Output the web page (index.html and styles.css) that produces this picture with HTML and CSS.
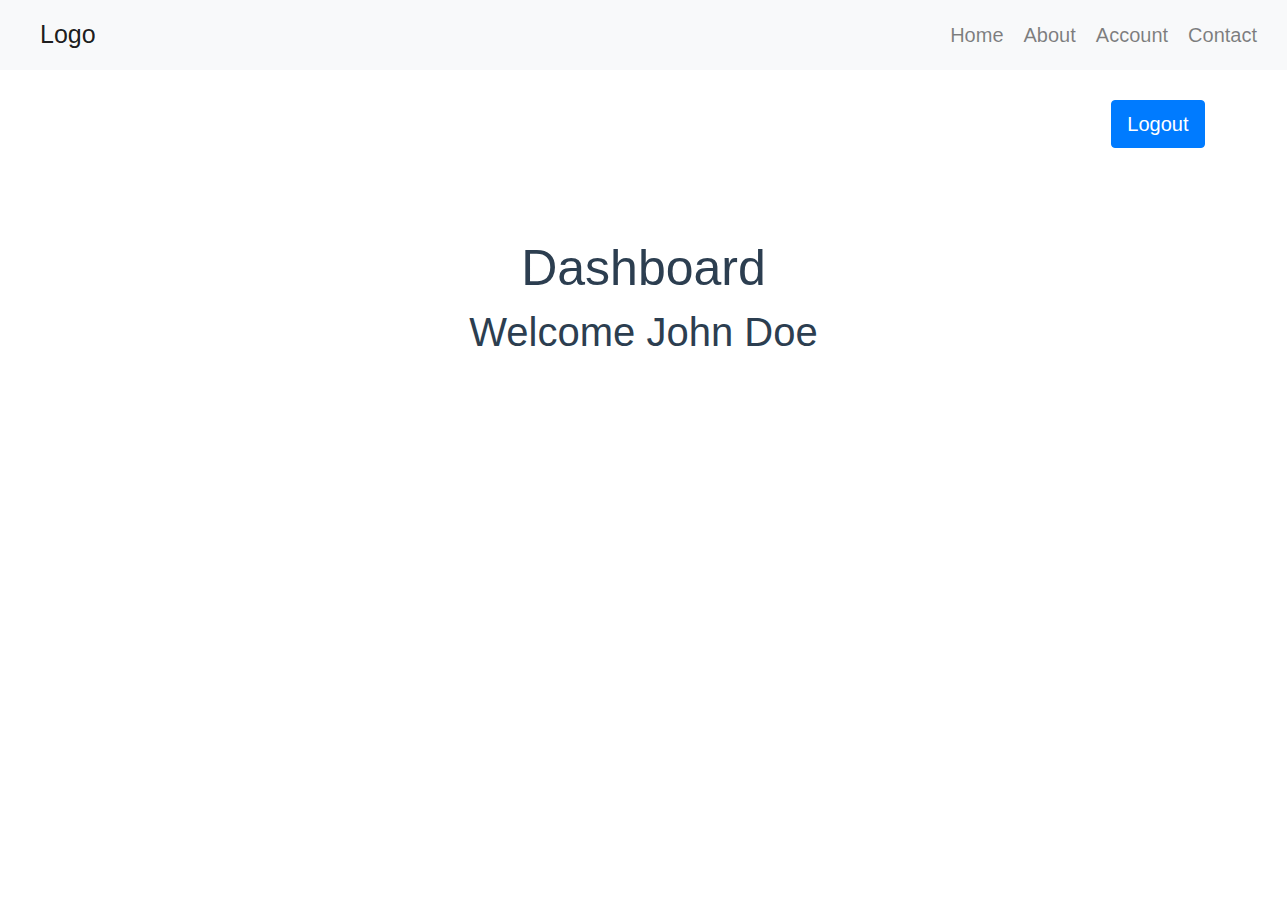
FILE: index.html
```html
<!DOCTYPE html>
<html lang="en">
<head>
<meta charset="utf-8">
<title>Dashboard</title>
<link rel="stylesheet" href="styles.css">
</head>
<body>
<nav class="navbar">
  <a class="brand" href="#">Logo</a>
  <ul class="nav">
    <li><a class="nav-link" href="#">Home</a></li>
    <li><a class="nav-link" href="#">About</a></li>
    <li><a class="nav-link" href="#">Account</a></li>
    <li><a class="nav-link" href="#">Contact</a></li>
  </ul>
</nav>
<main class="main">
  <div class="actions">
    <button class="btn-primary" type="button">Logout</button>
  </div>
  <section class="hero">
    <h1 class="title">Dashboard</h1>
    <h2 class="subtitle">Welcome John Doe</h2>
  </section>
</main>
</body>
</html>
```
FILE: styles.css
```css
html { font-size: 20px; }
body {
  margin: 0;
  font-family: "Liberation Sans", Arial, sans-serif;
  font-size: 20px;
  line-height: 1.5;
  color: #212529;
  background: #fff;
}
.navbar {
  display: flex;
  align-items: center;
  justify-content: space-between;
  background: #f8f9fa;
  padding: 10px 20px 10px 40px;
  height: 70px;
  box-sizing: border-box;
}
.brand {
  font-size: 25px;
  line-height: 1.5;
  color: rgba(0,0,0,.9);
  text-decoration: none;
}
.nav {
  display: flex;
  list-style: none;
  margin: 0;
  padding: 0;
}
.nav-link {
  display: block;
  padding: 10px;
  color: rgba(0,0,0,.5);
  text-decoration: none;
}
.main {
  display: flex;
  flex-direction: column;
}
.actions {
  display: flex;
  justify-content: flex-end;
  padding: 30px 82px 0 0;
}
.btn-primary {
  font-family: inherit;
  font-size: 20px;
  line-height: 1.5;
  color: #fff;
  background: #007bff;
  border: 1px solid #007bff;
  border-radius: 4px;
  padding: 8px 15.5px;
  cursor: pointer;
}
.hero {
  text-align: center;
  color: #2c3e50;
  padding-top: 90px;
}
.title {
  font-size: 50px;
  font-weight: 400;
  line-height: 1.2;
  margin: 0 0 10px;
}
.subtitle {
  font-size: 40px;
  font-weight: 400;
  line-height: 1.2;
  margin: 0;
}
```
